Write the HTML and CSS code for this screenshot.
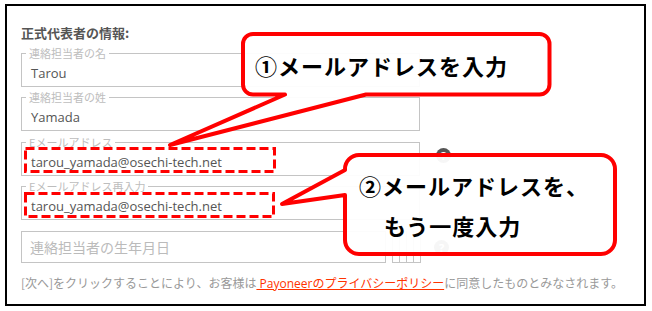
FILE: index.html
```html
<!DOCTYPE html>
<html lang="ja">
<head>
<meta charset="utf-8">
<title>正式代表者の情報</title>
<link rel="stylesheet" href="styles.css">
</head>
<body>
<div class="frame">
  <h2 class="title">正式代表者の情報:</h2>
  <fieldset class="field"><legend>連絡担当者の名</legend><div class="value">Tarou</div></fieldset>
  <fieldset class="field"><legend>連絡担当者の姓</legend><div class="value">Yamada</div></fieldset>
  <div class="row">
    <fieldset class="field"><legend>Eメールアドレス</legend><div class="value">tarou_yamada@osechi-tech.net</div></fieldset>
    <span class="help help-top">?</span>
  </div>
  <fieldset class="field"><legend>Eメールアドレス再入力</legend><div class="value">tarou_yamada@osechi-tech.net</div></fieldset>
  <div class="row date-row">
    <div class="date-input">連絡担当者の生年月日</div>
    <div class="cal"><span></span><span></span><span></span><span></span></div>
    <span class="help">?</span>
  </div>
  <p class="note">[次へ]をクリックすることにより、お客様は<a class="link" href="#"> Payoneerのプライバシーポリシー</a>に同意したものとみなされます。</p>
</div>

<div class="overlay">
  <svg class="shapes" width="652" height="311" viewBox="0 0 652 311" xmlns="http://www.w3.org/2000/svg">
    <rect x="25.5" y="148.5" width="249" height="23" fill="none" stroke="#ff0000" stroke-width="3" stroke-dasharray="9 4"/>
    <rect x="25.5" y="193.5" width="248" height="23" fill="none" stroke="#ff0000" stroke-width="3" stroke-dasharray="9 4"/>
    <path d="M253 34 H539.5 A10 10 0 0 1 549.5 44 V84.5 A10 10 0 0 1 539.5 94.5 H366 L170 145 L285 94.5 H253 A10 10 0 0 1 243 84.5 V44 A10 10 0 0 1 253 34 Z" fill="#ffffff" fill-opacity="0.95" stroke="#ff0000" stroke-width="4" stroke-linejoin="round"/>
    <path d="M359 155 H601 A14 14 0 0 1 615 169 V240 A14 14 0 0 1 601 254 H359 A14 14 0 0 1 345 240 V195 L282 204 L345 170 V169 A14 14 0 0 1 359 155 Z" fill="#ffffff" fill-opacity="0.95" stroke="#ff0000" stroke-width="4" stroke-linejoin="round"/>
  </svg>
  <div class="callout-text t1">①メールアドレスを入力</div>
  <div class="callout-text t2">
    <div>②メールアドレスを、</div>
    <div class="indent">もう一度入力</div>
  </div>
</div>
</body>
</html>
```

FILE: styles.css
```css
* { box-sizing: border-box; }

html, body {
  margin: 0;
  padding: 0;
  background: #ffffff;
}

body {
  width: 652px;
  height: 311px;
  overflow: hidden;
  position: relative;
  font-family: "Open Sans", "Noto Sans CJK JP", sans-serif;
}

.frame {
  margin: 4px 0 0 5px;
  width: 641px;
  height: 302px;
  border: 2px solid #000000;
  padding: 18.5px 0 0 14px;
}

.title {
  margin: 0 0 6px 0;
  font-family: "Noto Sans CJK JP", sans-serif;
  font-size: 13px;
  line-height: 16px;
  font-weight: bold;
  color: #555555;
}

.field {
  margin: 0 0 4.5px 0;
  width: 399px;
  border: 1px solid #c4c4c4;
  padding: 3px 8px 3px 8px;
  min-inline-size: 0;
}

.field legend {
  font-family: "Noto Sans CJK JP", sans-serif;
  font-size: 11px;
  line-height: 13px;
  color: #bdbdbd;
  padding: 0 3px;
  margin-left: -4px;
}

.value {
  font-size: 13px;
  line-height: 20px;
  color: #555555;
  padding-left: 1px;
}

.row {
  display: flex;
  align-items: flex-start;
}

.row .field { flex: none; }

.help {
  flex: none;
  width: 15px;
  height: 15px;
  border-radius: 50%;
  background: #555555;
  color: #ffffff;
  font-size: 11px;
  line-height: 15px;
  text-align: center;
  font-weight: bold;
}

.help-top {
  margin: 12px 0 0 16px;
}

.date-row {
  margin-top: 11px;
  align-items: center;
}

.date-input {
  width: 365px;
  height: 32px;
  border: 1px solid #c4c4c4;
  padding-left: 8px;
  font-family: "Noto Sans CJK JP", sans-serif;
  font-size: 14px;
  line-height: 30px;
  color: #bbbbbb;
}

.cal {
  margin-left: 6px;
  width: 29px;
  height: 32px;
  display: flex;
  border-bottom: 1px solid #c4c4c4;
  border-left: 1px solid #c4c4c4;
}

.cal span {
  flex: 1;
  border-right: 1px solid #c4c4c4;
}

.date-row .help {
  margin-left: 13px;
}

.note {
  margin: 12px 0 0 0;
  font-family: "Noto Sans CJK JP", sans-serif;
  font-size: 12px;
  line-height: 16px;
  color: #999999;
  white-space: nowrap;
}

.link {
  color: #ff3300;
  text-decoration: underline;
  font-family: "Open Sans", "Noto Sans CJK JP", sans-serif;
}

.overlay {
  position: absolute;
  left: 0;
  top: 0;
  width: 652px;
  height: 311px;
  pointer-events: none;
}

.shapes {
  display: block;
}

.callout-text {
  position: absolute;
  font-family: "Noto Sans CJK JP", sans-serif;
  font-weight: bold;
  font-size: 22px;
  letter-spacing: 1px;
  color: #000000;
  white-space: nowrap;
}

.t1 {
  left: 255px;
  top: 52px;
  line-height: 26px;
}

.t2 {
  left: 359px;
  top: 165px;
  line-height: 40px;
}

.indent {
  padding-left: 25px;
}
```
